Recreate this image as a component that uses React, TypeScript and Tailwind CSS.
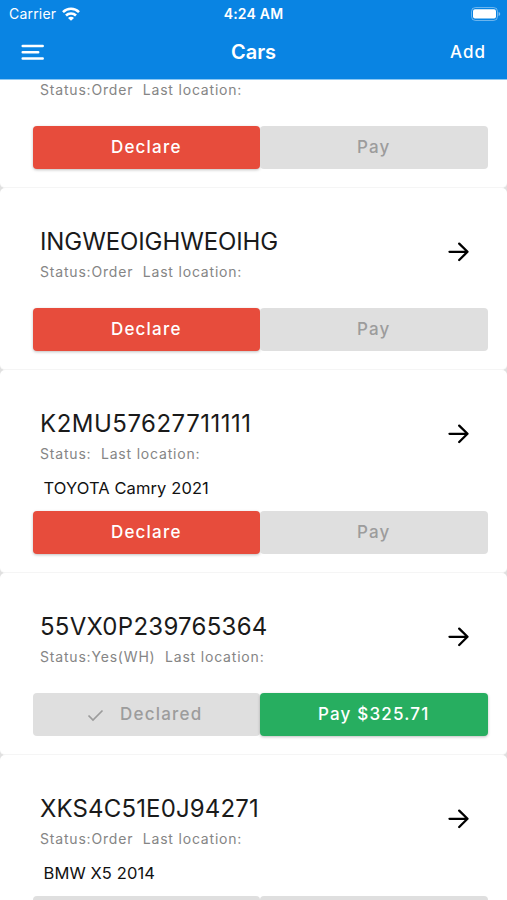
import clsx from "clsx"

type Car = {
    vin: string
    vinClass: string
    status: string
    model?: string
    declared?: boolean
    declareDisabled?: boolean
    amount?: string
}

const cars: Car[] = [
    { vin: "", vinClass: "", status: "Order" },
    { vin: "INGWEOIGHWEOIHG", vinClass: "tracking-[-0.1px]", status: "Order" },
    { vin: "K2MU57627711111", vinClass: "tracking-[0.5px]", status: "", model: "TOYOTA Camry 2021" },
    { vin: "55VX0P239765364", vinClass: "tracking-[0.27px]", status: "Yes(WH)", declared: true, amount: "$325.71" },
    { vin: "XKS4C51E0J94271", vinClass: "tracking-[0.15px]", status: "Order", model: "BMW X5 2014", declareDisabled: true },
]

function StatusBar() {
    return (
        <div className="grid h-[27px] grid-cols-3 items-center pl-[9px] pr-[6px] text-[14px] leading-none">
            <div className="flex items-center gap-[6px]">
                <span className="tracking-[0.2px]">Carrier</span>
                <svg width="18" height="14" viewBox="0 0 18 14" fill="none" stroke="currentColor" strokeWidth="2.6">
                    <path d="M1 5.100a11.400 11.400 0 0 1 16 0" />
                    <path d="M4 8.500a7.100 7.100 0 0 1 10 0" />
                    <path d="M9 13.700 6 10.900a4.200 4.200 0 0 1 6 0Z" fill="currentColor" stroke="none" />
                </svg>
            </div>
            <span className="-ml-[3px] text-center font-semibold tracking-[0.2px]">4:24 AM</span>
            <svg className="justify-self-end" width="30" height="14" viewBox="0 0 30 14" fill="none">
                <rect x="0.500" y="0.500" width="26" height="13" rx="4" stroke="#fff" strokeOpacity="0.4" strokeWidth="1" />
                <rect x="2" y="2.200" width="23" height="9.400" rx="2" fill="#fff" />
                <path d="M27.600 5v4c1-.4 1.600-1.100 1.600-2s-.6-1.600-1.600-2Z" fill="#fff" fillOpacity="0.5" />
            </svg>
        </div>
    )
}

function Header() {
    return (
        <header className="h-[80px] shrink-0 border-b border-[#8cc8f3] bg-[#0984e3] text-white">
            <StatusBar />
            <div className="grid h-[50px] grid-cols-3 items-center pl-[21px] pr-[21px]">
                <svg width="23" height="16" viewBox="0 0 23 16" stroke="currentColor" strokeWidth="2.5" strokeLinecap="round">
                    <path d="M1.700 1.900h20M1.700 8.200h15.500M1.700 14.500h20" />
                </svg>
                <h1 className="text-center text-[20px] font-semibold leading-none">Cars</h1>
                <button className="justify-self-end text-[17px] font-medium leading-none tracking-[1px]">Add</button>
            </div>
        </header>
    )
}

type ActionProps = {
    label: string
    color: string
    disabled?: boolean
    checked?: boolean
}

function ActionButton({ label, color, disabled, checked }: ActionProps) {
    return (
        <button
            disabled={disabled}
            className={clsx(
                "flex h-[43px] flex-1 items-center justify-center rounded-[4px] pt-px text-[17px] font-medium tracking-[1.2px]",
                disabled ? "bg-[#dfdfdf] text-[#9c9c9c]" : "text-white shadow-[0_1px_3px_rgba(0,0,0,0.25)]",
                !disabled && color
            )}
        >
            {checked && (
                <svg className="-ml-[3px] mr-[16px]" width="17" height="13" viewBox="0 0 17 13" fill="none" stroke="currentColor" strokeWidth="1.7">
                    <path d="M1.500 6.500l4.500 4.500L15.500 1.500" />
                </svg>
            )}
            {label}
        </button>
    )
}

function CarCard({ car }: { car: Car }) {
    return (
        <article className={clsx("flex shrink-0 flex-col rounded-[5px] border-b border-[#f5f5f5] bg-white pl-[32.5px] pr-[19.5px]", car.model ? "h-[203px]" : "h-[182px]")}>
            <div className="flex h-[97px] items-start justify-between pt-[39px] pl-[7.5px] pr-[18px]">
                <div>
                    <h2 className={clsx("h-[30px] whitespace-nowrap text-[24px] leading-[30px] text-[#1a1a1a]", car.vinClass)}>{car.vin}</h2>
                    <p className="mt-[5px] whitespace-pre text-[14px] leading-[20px] tracking-[0.81px] text-[#858585]">
                        {`Status:${car.status}  Last location:`}
                    </p>
                </div>
                <svg className="mt-[15px]" width="22" height="20" viewBox="0 0 22 20" fill="none" stroke="#000" strokeWidth="2.300" strokeLinecap="round" strokeLinejoin="round">
                    <path d="M1.500 9.800h18M11.200 1.600l8.300 8.200-8.300 8.200" />
                </svg>
            </div>
            <div className={clsx("pl-[11px] text-[16.5px] leading-[42px] tracking-[0.1px] text-[#111]", car.model ? "h-[44px]" : "h-[23px]")}>{car.model}</div>
            <div className="flex">
                <ActionButton
                    label={car.declared ? "Declared" : "Declare"}
                    color="bg-[#e74c3c]"
                    disabled={car.declared || car.declareDisabled}
                    checked={car.declared}
                />
                <ActionButton label={car.amount ? `Pay ${car.amount}` : "Pay"} color="bg-[#27ae60]" disabled={!car.amount} />
            </div>
        </article>
    )
}

export default function App() {
    return (
        <div className="flex h-[900px] w-full flex-col overflow-hidden bg-[#e0e0e0] font-['Inter',sans-serif]">
            <Header />
            <main className="min-h-0 flex-1 overflow-hidden">
                <div className="-mt-[74px] flex flex-col">
                    {cars.map((car, i) => (
                        <CarCard key={i} car={car} />
                    ))}
                </div>
            </main>
        </div>
    )
}
